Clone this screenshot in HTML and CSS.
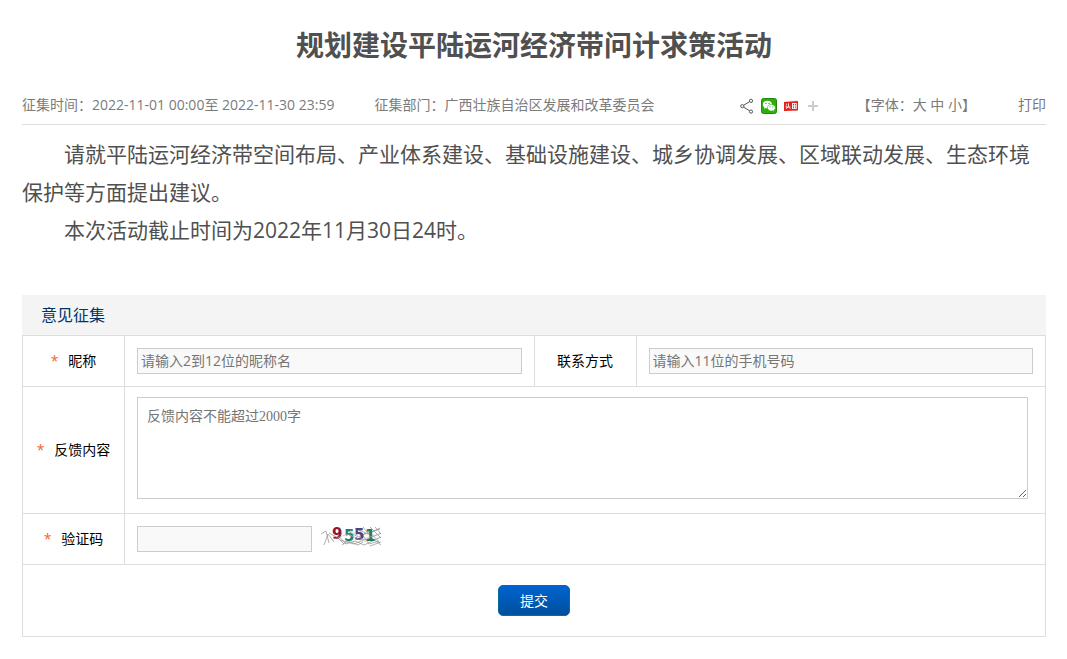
FILE: index.html
```html
<!DOCTYPE html>
<html lang="zh-CN">
<head>
<meta charset="utf-8">
<meta name="viewport" content="width=device-width,initial-scale=1.0">
<title>规划建设平陆运河经济带问计求策活动</title>
<link rel="stylesheet" href="styles.css">
</head>
<body>

<div class="article">
  <h1 class="title">规划建设平陆运河经济带问计求策活动</h1>

  <div class="info">
    <span class="info-time">征集时间：2022-11-01 00:00至 2022-11-30 23:59</span>
    <span class="info-dept">征集部门：广西壮族自治区发展和改革委员会</span>
    <div class="share">
      <a href="#" aria-label="分享">
        <svg width="16" height="16" viewBox="0 0 16 16" fill="none" stroke="#555" stroke-width="1">
          <path d="M10.500 3.800 4.700 7.200M4.700 9.200l5.800 3.500"/>
          <circle cx="12" cy="2.800" r="1.600"/>
          <circle cx="3.300" cy="8.200" r="1.600"/>
          <circle cx="12" cy="13.600" r="1.600"/>
        </svg>
      </a>
      <a href="#" aria-label="微信">
        <svg width="16" height="16" viewBox="0 0 16 16">
          <rect x=".5" y=".5" width="15" height="15" rx="2" fill="#2dae0c" stroke="#20890a"/>
          <path fill="#fff" d="M6.4 2.8C3.8 2.8 1.8 4.4 1.8 6.5c0 1.2.7 2.2 1.7 2.900L3.100 10.900l1.800-.9c.5.1 1 .2 1.500.2 2.600 0 4.600-1.700 4.600-3.700S9 2.800 6.400 2.800z"/>
          <path fill="#fff" stroke="#2dae0c" stroke-width=".6" d="M10.400 6.400c-2.300 0-4 1.400-4 3.300S8.100 13 10.400 13c.5 0 .9-.1 1.300-.2l1.600.8-.4-1.400c.9-.6 1.500-1.500 1.500-2.500 0-1.900-1.800-3.300-4-3.300z"/>
          <g fill="#2dae0c"><circle cx="4.900" cy="5.400" r=".7"/><circle cx="8" cy="5.400" r=".7"/><circle cx="9.100" cy="8.800" r=".6"/><circle cx="11.800" cy="8.800" r=".6"/></g>
        </svg>
      </a>
      <a href="#" aria-label="头条">
        <svg width="16" height="16" viewBox="0 0 16 16">
          <path fill="#eee" d="M1 3l13-1v2H1z"/>
          <path fill="#e5201c" d="M1 4l14-1v9.500L1 13z"/>
          <path fill="none" stroke="#fff" stroke-width=".9" d="M3 5.800l1 .8M2.800 7.500l1 .7M5.500 5.300v3L3.200 10.800M2.500 9h5M6 9.300l1.400 1.500M9 5.500h4.500M9.500 5.300v5.500M9 8h4.500M11.500 5.300v5.500M13.300 5.300v5.500M9 10.300h4.500"/>
        </svg>
      </a>
      <a href="#" aria-label="更多">
        <svg width="16" height="16" viewBox="0 0 16 16">
          <path fill="#ccc" d="M7 3h2v4h4v2H9v4H7V9H3V7h4z"/>
        </svg>
      </a>
    </div>
    <span class="font-size">【字体：<a href="#">大</a> <a href="#">中</a> <a href="#">小</a>】</span>
    <a href="#" class="print">打印</a>
  </div>

  <div class="content">
    <p>请就平陆运河经济带空间布局、产业体系建设、基础设施建设、城乡协调发展、区域联动发展、生态环境保护等方面提出建议。</p>
    <p>本次活动截止时间为2022年11月30日24时。</p>
  </div>

  <form class="feedback">
    <h2 class="feedback-title">意见征集</h2>
    <table>
      <colgroup>
        <col class="col-label"><col><col class="col-label"><col>
      </colgroup>
      <tr>
        <th><i>*</i><label for="nickname">昵称</label></th>
        <td><input type="text" id="nickname" class="text" placeholder="请输入2到12位的昵称名"></td>
        <th><label for="phone">联系方式</label></th>
        <td><input type="text" id="phone" class="text" placeholder="请输入11位的手机号码"></td>
      </tr>
      <tr>
        <th><i>*</i><label for="message">反馈内容</label></th>
        <td colspan="3"><textarea id="message" placeholder="反馈内容不能超过2000字"></textarea></td>
      </tr>
      <tr>
        <th><i>*</i><label for="code">验证码</label></th>
        <td colspan="3">
          <div class="code-row">
            <input type="text" id="code" class="text code">
            <svg class="captcha" width="62" height="22" viewBox="0 0 62 22">
              <g fill="none" stroke="#999" stroke-width=".8">
                <path d="M1 8l5-3 3 12M4 19L8 8l6 8M9 7l9 5 6 6M13 4l13 14 9-3 9 4M20 14l14 4 12-5M28 5l10 6 8-4M35 2l13 6 12-6M39 4l10 14 10-3M43 1l9 11 9 7M47 3l13 14M50 1l11 11M55 1l6 7M42 9L60 3M45 14L61 7M44 19L61 11M50 20l11-4M22 19l6-4 10 4 5-3"/>
              </g>
              <g font-family="DejaVu Sans, sans-serif" font-size="15" font-weight="bold">
                <text x="12" y="13" fill="#8c1734">9</text>
                <text x="24" y="15" fill="#217f70">5</text>
                <text x="34" y="14" fill="#51417c">5</text>
                <text x="45" y="15" fill="#287a57">1</text>
              </g>
              <path fill="none" stroke="#bbb" stroke-width=".6" d="M14 13l14-5 12 6 20-6M30 4l16 12"/>
            </svg>
          </div>
        </td>
      </tr>
      <tr>
        <td colspan="4" class="submit-cell"><button type="button" class="submit">提交</button></td>
      </tr>
    </table>
  </form>
</div>

</body>
</html>
```
FILE: styles.css
```css
body{
  margin:0;
  font-family:"Open Sans","Noto Sans CJK SC",sans-serif;
  font-size:14px;
  color:#000;
  background:#fff;
}

a{
  color:inherit;
  text-decoration:none;
}

.article{
  margin:0 21px 0 22px;
  padding-top:25px;
}

.title{
  margin:0;
  font-size:28px;
  line-height:40px;
  text-align:center;
  color:#505050;
}

.info{
  display:flex;
  align-items:center;
  box-sizing:border-box;
  height:39px;
  margin-top:21px;
  padding-bottom:2px;
  border-bottom:1px solid #ddd;
  white-space:nowrap;
  color:#7b7b7b;
}

.info-dept{
  margin-left:40px;
}

.share{
  display:flex;
  gap:6px;
  margin-top:4px;
  margin-left:auto;
}

.share svg{
  display:block;
}

.font-size{
  margin-left:36px;
}

.print{
  margin-left:42px;
}

.content{
  padding-top:10px;
  font-size:21px;
  line-height:38px;
  color:#505050;
}

.content p{
  margin:0;
  text-indent:2em;
}

.feedback{
  margin-top:46px;
}

.feedback-title{
  margin:0;
  padding-left:19px;
  font-size:16px;
  font-weight:normal;
  line-height:40px;
  color:#003366;
  background:#f4f4f4;
}

table{
  width:100%;
  table-layout:fixed;
  border-collapse:collapse;
}

.col-label{
  width:102px;
}

th,
td{
  box-sizing:border-box;
  height:51px;
  padding:0 12px;
  border:1px solid #ddd;
}

th{
  padding:0 0 2px;
  font-weight:normal;
  text-align:center;
}

th i{
  margin-right:10px;
  font-style:normal;
  color:#f0642d;
}

.text{
  display:block;
  box-sizing:border-box;
  width:100%;
  height:26px;
  padding:0 3px 2px;
  font:inherit;
  border:1px solid #ccc;
  background:#f9f9f9;
}

::placeholder{
  color:#757575;
}

textarea{
  display:block;
  box-sizing:border-box;
  width:calc(100% - 5px);
  height:102px;
  margin:10px 0 14px;
  padding:9px;
  font-family:"Liberation Serif","Noto Sans CJK SC",serif;
  font-size:14px;
  line-height:20px;
  border:1px solid #ccc;
}

.code-row{
  display:flex;
  gap:8px;
}

.code{
  width:175px;
}

.submit-cell{
  height:72px;
}

.submit{
  display:block;
  width:72px;
  height:31px;
  margin:0 auto;
  padding:0 0 2px;
  font:inherit;
  color:#fff;
  border:1px solid #0b68a0;
  border-radius:5px;
  background:linear-gradient(#0063d1,#00509b);
  cursor:pointer;
}
```
